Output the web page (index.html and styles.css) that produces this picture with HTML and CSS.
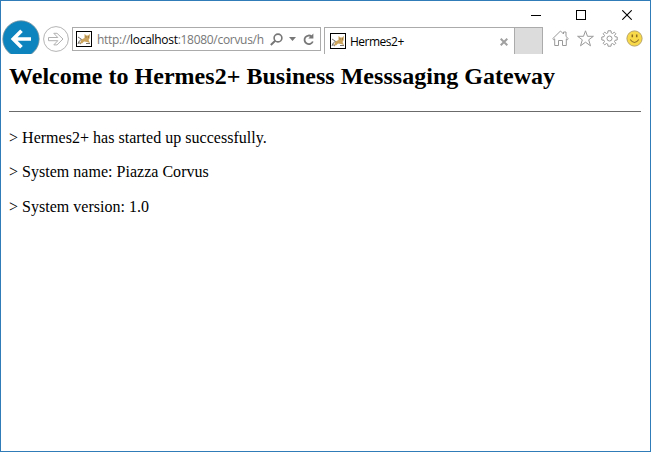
FILE: index.html
```html
<!DOCTYPE html>
<html lang="en">
<head>
<meta charset="utf-8">
<title>Hermes2+</title>
<link rel="stylesheet" href="styles.css">
</head>
<body>
<svg class="defs" width="0" height="0">
  <symbol id="favicon" viewBox="0 0 16 16">
    <rect x=".5" y=".5" width="15" height="15" fill="#fff" stroke="#000"/>
    <path d="M2 6L5 8M2 13Q3 9 6 8M2 11L5 13M10 12.5H14" stroke="#77736c" fill="none"/>
    <path d="M4 12L5.5 8.5L8.5 7L8.5 3L10.5 4.5H12L14 3L13.5 7.5L12.5 9L14 12L11 11L8 10.5L6 12.5Z" fill="#cda45c"/>
    <path d="M9.5 6H10.5M12 6H13" stroke="#6b5638" fill="none"/>
  </symbol>
</svg>
<div class="window">
  <header class="chrome">
    <div class="titlebar">
      <svg width="10" height="10"><path d="M0 5.5H10" stroke="#000"/></svg>
      <svg width="10" height="10"><rect x=".5" y=".5" width="9" height="9" fill="none" stroke="#000"/></svg>
      <svg width="10" height="10"><path d="M.3 .3L9.7 9.7M9.7 .3L.3 9.7" stroke="#000" stroke-width="1.1"/></svg>
    </div>
    <div class="toolbar">
      <svg class="back" width="38" height="38" viewBox="0 0 38 38">
        <circle cx="19" cy="19" r="18.2" fill="#0d84bd" stroke="#7e949e" stroke-width=".8"/>
        <path d="M29 19H11.5M19.5 10.8L11.3 19L19.5 27.2" fill="none" stroke="#fff" stroke-width="3.7"/>
      </svg>
      <svg class="forward" width="26" height="26" viewBox="0 0 26 26">
        <circle cx="13" cy="13" r="12.4" fill="#fff" stroke="#b4b4b4"/>
        <path d="M5.5 11.5H14.8L10.8 7.3H14L20 13L14 18.9H10.8L14.8 14.7H5.5Z" fill="#fff" stroke="#b0b0b0"/>
      </svg>
      <div class="address">
        <svg class="favicon" width="16" height="16"><use href="#favicon"/></svg>
        <span class="url">http://<b>localhost</b>:18080/corvus/h</span>
        <svg class="search" width="13" height="13" viewBox="0 0 13 13"><circle cx="8" cy="5" r="3.9" fill="none" stroke="#777" stroke-width="1.6"/><path d="M5.2 7.8L.8 12" stroke="#777" stroke-width="2"/></svg>
        <svg class="drop" width="7" height="4"><path d="M0 0H7L3.5 4Z" fill="#777"/></svg>
        <svg class="reload" width="12" height="13" viewBox="0 0 12 13"><path d="M8.7 3.6A4.3 4.3 0 1 0 9.8 8.5" fill="none" stroke="#777" stroke-width="1.8"/><path d="M10.4 .5V5.6H5.3Z" fill="#777"/></svg>
      </div>
      <div class="tab">
        <svg class="favicon" width="16" height="16"><use href="#favicon"/></svg>
        <span class="tab-title">Hermes2+</span>
        <svg class="close" width="8" height="8"><path d="M.7 .7L7.3 7.3M7.3 .7L.7 7.3" stroke="#a0a0a0" stroke-width="2"/></svg>
      </div>
      <div class="new-tab"></div>
      <div class="tools">
        <svg width="17" height="17" viewBox="0 0 17 17" fill="none" stroke="#999"><path d="M.7 8.7L8.5 1L11.5 4V2H14V6.5L16.3 8.7L15.3 9.7L14.3 8.8V15.5H10.5V10.5H6.5V15.5H2.7V8.8L1.7 9.7Z"/></svg>
        <svg width="17" height="17" viewBox="0 0 17 17" fill="none" stroke="#999"><path d="M8.5 .8L10.5 6.3H16.4L11.7 9.8L13.5 15.8L8.5 12.2L3.5 15.8L5.3 9.8L.6 6.3H6.5Z"/></svg>
        <svg width="17" height="17" viewBox="0 0 17 17" fill="none" stroke="#999"><path d="M7 .8H10L10.3 3L11.5 3.5L13.3 2.2L14.8 3.7L13.5 5.5L14 6.7L16.2 7V10L14 10.3L13.5 11.5L14.8 13.3L13.3 14.8L11.5 13.5L10.3 14L10 16.2H7L6.7 14L5.5 13.5L3.7 14.8L2.2 13.3L3.5 11.5L3 10.3L.8 10V7L3 6.7L3.5 5.5L2.2 3.7L3.7 2.2L5.5 3.5L6.7 3Z"/><circle cx="8.5" cy="8.5" r="2.5"/></svg>
        <svg width="17" height="17" viewBox="0 0 17 17"><circle cx="8.5" cy="8.5" r="7.6" fill="#f8d94a" stroke="#b8a467"/><path d="M6.3 4.5V7.3M10.7 4.5V7.3" stroke="#8a6b20" stroke-width="1.5"/><path d="M4.2 9.5Q8.5 15.5 12.8 9.5" fill="none" stroke="#94752a" stroke-width="1.1"/></svg>
      </div>
    </div>
  </header>
  <main class="page">
    <h2>Welcome to Hermes2+ Business Messsaging Gateway</h2>
    <hr>
    <p>&gt; Hermes2+ has started up successfully.</p>
    <p>&gt; System name: Piazza Corvus</p>
    <p>&gt; System version: 1.0</p>
  </main>
</div>
</body>
</html>
```
FILE: styles.css
```css
* { box-sizing: border-box; }
body { margin: 0; background: #fff; }
svg { display: block; flex: none; }
.defs { position: absolute; }
.window {
  height: 452px;
  border: 1px solid #2f7cb9;
  overflow: hidden;
}
.chrome { height: 53px; overflow: hidden; font-family: "Open Sans", "Noto Sans", sans-serif; }
.titlebar {
  height: 26px;
  display: flex;
  justify-content: flex-end;
  gap: 36px;
  padding: 9px 18px 0 0;
}
.titlebar svg:first-child { margin-right: -1px; }
.toolbar { height: 27px; display: flex; align-items: flex-start; }
.back { margin: -7px 0 0 1px; }
.forward { margin: -1px 0 0 3px; }
.address {
  width: 249px;
  height: 24px;
  margin-left: 3px;
  border: 1px solid #ababab;
  display: flex;
  align-items: center;
  padding-left: 3px;
}
.url {
  width: 173px;
  margin-left: 5px;
  padding-top: 2px;
  font-size: 12px;
  letter-spacing: -.3px;
  line-height: 20px;
  color: #777;
  white-space: nowrap;
}
.url b { font-weight: 400; color: #000; }
.drop { margin-left: 6px; }
.reload { margin-left: 7px; }
.tab {
  width: 190px;
  height: 27px;
  margin-left: 3px;
  border: 1px solid #ababab;
  border-width: 1px 0 0 1px;
  display: flex;
  align-items: center;
  padding: 0 6px 0 5px;
}
.tab-title { margin-left: 4px; padding-top: 2px; font-size: 12px; letter-spacing: -.5px; line-height: 20px; color: #000; }
.close { margin: 2px 0 0 auto; }
.new-tab {
  width: 29px;
  height: 27px;
  background: #dcdcdc;
  border: 1px solid #ababab;
  border-bottom: 0;
}
.tools { display: flex; gap: 7.5px; margin: 3px 0 0 9px; }
.page { padding: 8px 8px 0; font: 16px/18.4px "Liberation Serif", "Times New Roman", serif; color: #000; }
.page h2 { margin: 0; font-size: 24px; letter-spacing: .025px; line-height: 28px; }
.page hr { margin: 21px 1px 17px 0; height: 1px; border: 0; background: #6b6b6b; }
.page p { margin: 0 0 16px; letter-spacing: .02px; }
```
